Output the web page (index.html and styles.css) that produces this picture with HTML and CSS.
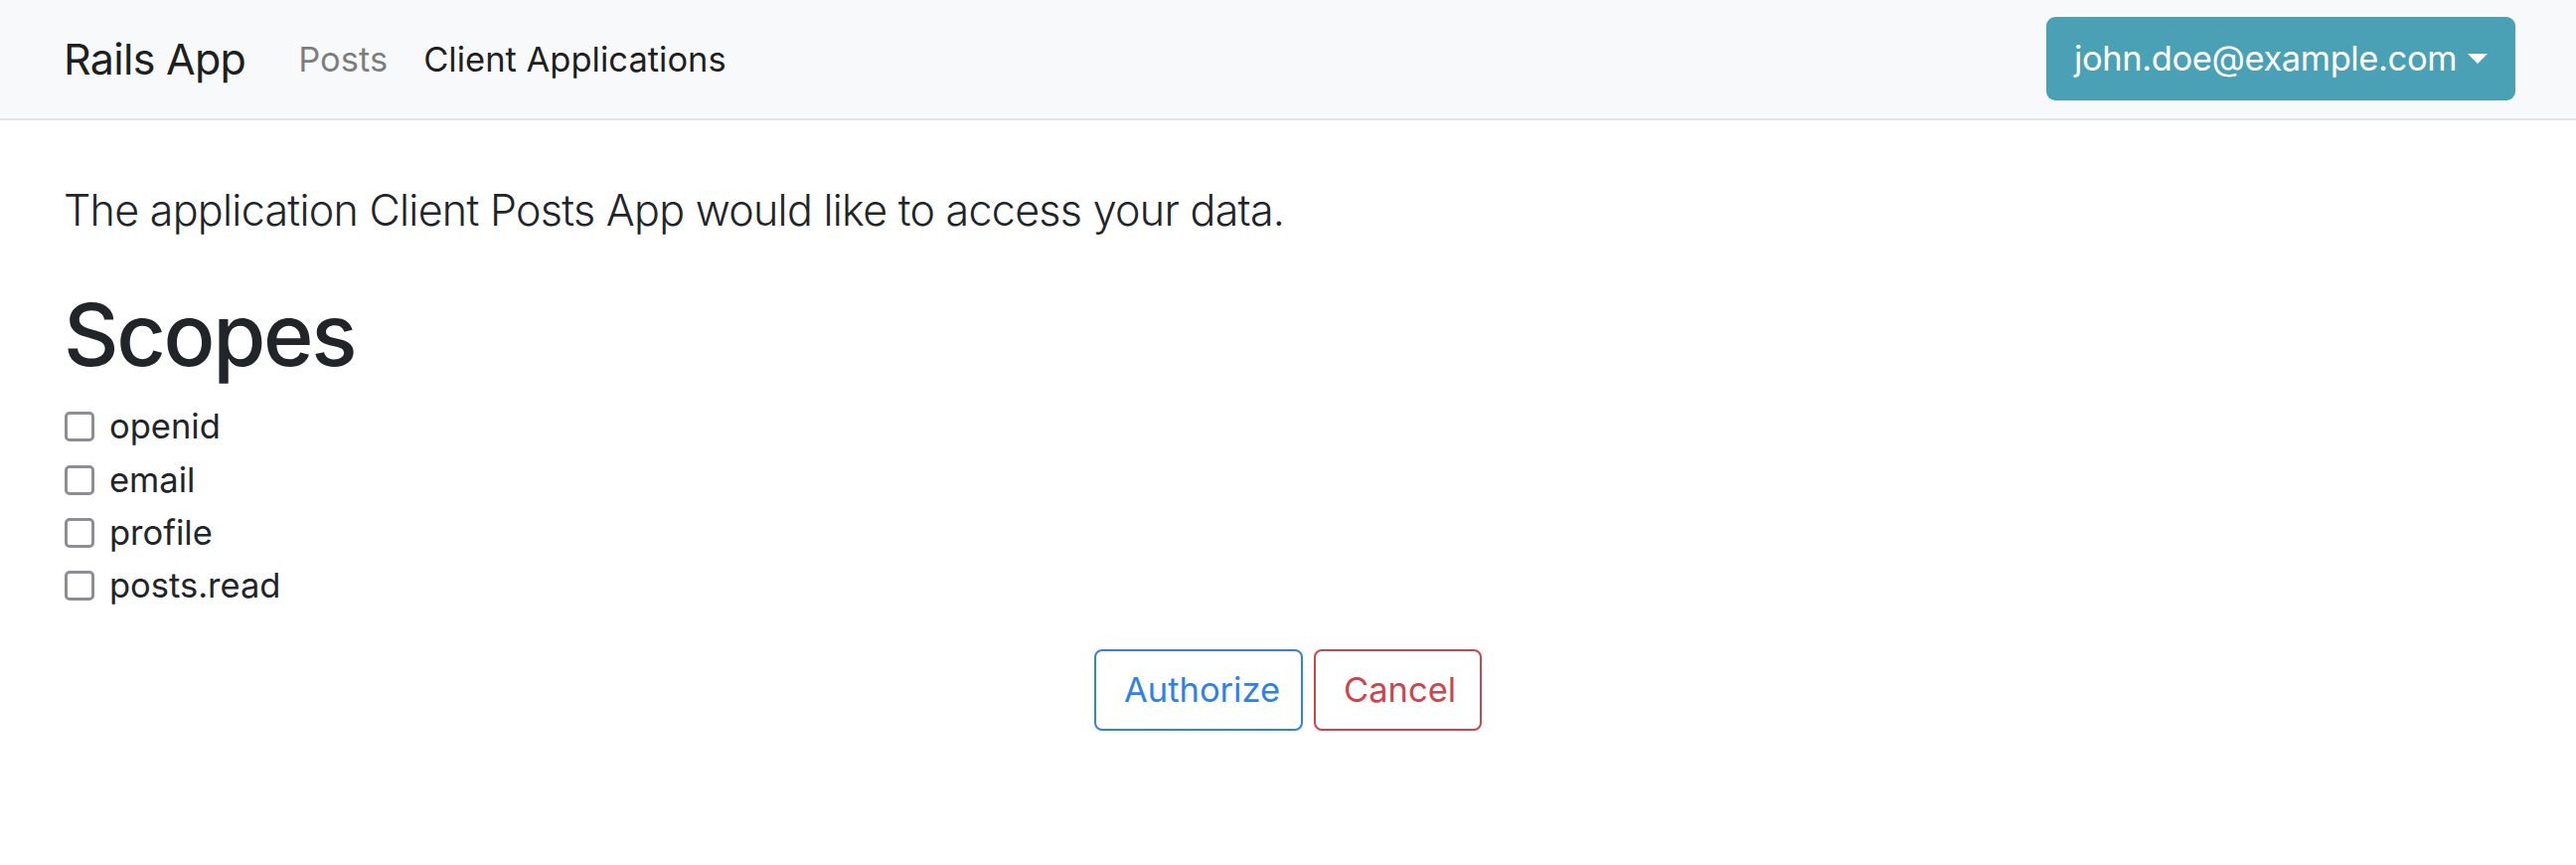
FILE: index.html
```html
<!DOCTYPE html>
<html lang="en">
<head>
<meta charset="utf-8">
<title>Rails App</title>
<link rel="stylesheet" href="styles.css">
</head>
<body>
<nav class="navbar">
  <div class="nav-left">
    <a class="brand" href="#">Rails App</a>
    <a class="nav-link muted" href="#">Posts</a>
    <a class="nav-link active" href="#">Client Applications</a>
  </div>
  <button class="user-btn" type="button">john.doe@example.com<span class="caret"></span></button>
</nav>
<main class="content">
  <p class="lead">The application Client Posts App would like to access your data.</p>
  <h1 class="title">Scopes</h1>
  <ul class="scopes">
    <li class="scope"><span class="box"></span><span class="scope-label">openid</span></li>
    <li class="scope"><span class="box"></span><span class="scope-label">email</span></li>
    <li class="scope"><span class="box"></span><span class="scope-label">profile</span></li>
    <li class="scope"><span class="box"></span><span class="scope-label">posts.read</span></li>
  </ul>
  <div class="actions">
    <button class="btn btn-blue" type="button">Authorize</button>
    <button class="btn btn-red" type="button">Cancel</button>
  </div>
</main>
</body>
</html>
```

FILE: styles.css
```css
* { box-sizing: border-box; }
html, body { margin: 0; padding: 0; }
body {
  font-family: Inter, "Noto Sans", sans-serif;
  font-size: 34.5px;
  line-height: 1.5;
  color: #212529;
  background: #fff;
}
.navbar {
  height: 121px;
  background: #f8f9fa;
  border-bottom: 2px solid #e1e3e6;
  display: flex;
  align-items: center;
  justify-content: space-between;
  padding: 0 61px 0 64px;
}
.nav-left { display: flex; align-items: center; }
.brand {
  font-size: 43px;
  color: rgba(0,0,0,.9);
  text-decoration: none;
  margin-right: 53px;
  letter-spacing: -0.7px;
}
.nav-link {
  font-size: 34.5px;
  text-decoration: none;
  padding: 0 17px;
}
.nav-link.muted { color: rgba(0,0,0,.5); padding-left: 0; padding-right: 19px; }
.nav-link.active { color: rgba(0,0,0,.9); }
.user-btn {
  height: 84px;
  margin-top: -2px;
  font-family: inherit;
  font-size: 34.5px;
  letter-spacing: -0.4px;
  color: #fff;
  background: #4aa1b5;
  border: none;
  border-radius: 9px;
  padding: 0 28px 0 28px;
  display: flex;
  align-items: center;
}
.caret {
  display: inline-block;
  margin-left: 11px;
  width: 0; height: 0;
  border-top: 10px solid #fff;
  border-left: 10px solid transparent;
  border-right: 10px solid transparent;
}
.content { padding: 58px 64px 0 64px; }
.lead {
  font-size: 43px;
  font-weight: 300;
  line-height: 1.5;
  letter-spacing: -0.72px;
  margin: 0 0 42px 0;
}
.title {
  font-size: 86px;
  font-weight: 500;
  line-height: 1.2;
  letter-spacing: -2.3px;
  margin: 0 0 14px 0;
}
.scopes { list-style: none; margin: 0; padding: 0; }
.scope {
  height: 53.3px;
  display: flex;
  align-items: center;
}
.box {
  width: 30px; height: 30px;
  border: 3px solid #8e8d96;
  border-radius: 5px;
  background: #fff;
  margin-left: 1px;
  margin-right: 15px;
}
.actions {
  display: flex;
  justify-content: center;
  gap: 11px;
  margin-top: 37px;
}
.btn {
  height: 82px;
  font-family: inherit;
  font-size: 34.5px;
  background: #fff;
  border: 2px solid;
  border-radius: 8px;
  padding: 0 28px;
}
.btn-blue { color: #2f80ef; border-color: #2f80ef; width: 210px; }
.btn-red { color: #cf444b; border-color: #cf444b; width: 169px; }
```
